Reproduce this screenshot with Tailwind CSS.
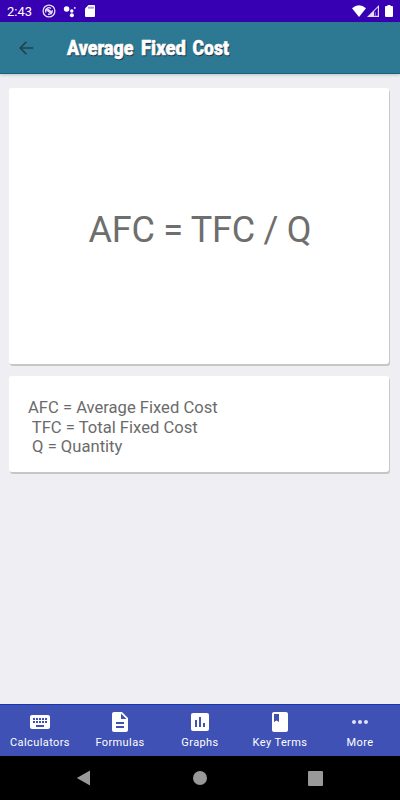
<!DOCTYPE html>
<html lang="en">
<head>
<meta charset="utf-8">
<title>Average Fixed Cost</title>
<script src="https://cdn.jsdelivr.net/npm/@tailwindcss/browser@4"></script>
</head>
<body class="w-[400px] h-[800px] overflow-hidden flex flex-col bg-[#efeef3] font-[Roboto,sans-serif]">
<div class="h-[22px] shrink-0 bg-[#3700b3] flex items-center text-white pl-[7px] pr-[7px]">
  <span class="text-[13px] leading-[22px] w-[35px] whitespace-nowrap pt-px">2:43</span>
  <svg class="w-[14px] h-[14px]" viewBox="0 0 14 14" fill="none" stroke="#e9e2f8"><circle cx="7" cy="7" r="5.9" stroke-width="1.3"/><path d="M4 8.500A3.300 3.300 0 0 1 9 4.400M10.200 6.200A3.300 3.300 0 0 1 6 10.100" stroke-width="1.300"/><path d="M4.200 5.500l5.600 4.500M5.500 5l4.800 3.500" stroke-width="1.300"/></svg>
  <svg class="w-[14px] h-[14px] ml-[7px]" viewBox="0 0 14 14" fill="#fff"><circle cx="3.6" cy="5" r="2.8"/><circle cx="8.8" cy="7" r="1.7"/><circle cx="11.8" cy="3.9" r=".9"/><circle cx="8.9" cy="11.2" r="2"/></svg>
  <svg class="w-[10px] h-[12px] ml-[8px]" viewBox="0 0 10 12"><path fill="#fff" d="M3.5 0H9a1 1 0 0 1 1 1v10a1 1 0 0 1-1 1H1a1 1 0 0 1-1-1V3.5z"/><path stroke="#3700b3" stroke-width=".8" d="M4 1.7v2M6 1.7v2M8 1.7v2"/></svg>
  <svg class="w-[14px] h-[12px] ml-auto" viewBox="0 0 14 12" fill="#fff"><path d="M0 3.2Q7-2.6 14 3.2L7 12z"/></svg>
  <svg class="w-[12px] h-[12px] ml-[1px]" viewBox="0 0 12 12"><path d="M12 0v12H0z" fill="#e4dcf5"/><path d="M7 6.4L10.8 2.6v8.2H7z" fill="#3700b3"/><path d="M8.3 7.2v3.6" stroke="#bfaee8" stroke-width=".7"/></svg>
  <svg class="w-[8px] h-[12px] ml-[6px]" viewBox="0 0 8 12" fill="#fff"><path d="M2.5 0h3v1H7a1 1 0 0 1 1 1v9a1 1 0 0 1-1 1H1a1 1 0 0 1-1-1V2a1 1 0 0 1 1-1h1.500z"/></svg>
</div>
<header class="h-[52px] shrink-0 bg-[#2d7893] border-b border-[#13657f] shadow-[0_1px_3px_rgba(0,0,0,0.2)] flex items-center pl-[19px]">
  <svg class="w-[15px] h-[14px]" viewBox="0 0 15 14" fill="none" stroke="#1d4454" stroke-width="1.6"><path d="M14.300 7H1.200M7.300.9L1.200 7l6.100 6.100"/></svg>
  <svg class="w-[180px] h-[30px] ml-[32px]" viewBox="0 0 180 30" font-family="Roboto, sans-serif" font-weight="900" font-size="19.500" stroke-width=".5">
    <g fill="#17333f" stroke="#17333f"><text x="1.800" y="23.200" textLength="66.500" lengthAdjust="spacingAndGlyphs">Average</text><text x="75.800" y="23.200" textLength="45" lengthAdjust="spacingAndGlyphs">Fixed</text><text x="127.300" y="23.200" textLength="36.500" lengthAdjust="spacingAndGlyphs">Cost</text></g>
    <g fill="#fff" stroke="#fff"><text x="1" y="22.300" textLength="66.500" lengthAdjust="spacingAndGlyphs">Average</text><text x="75" y="22.300" textLength="45" lengthAdjust="spacingAndGlyphs">Fixed</text><text x="126.500" y="22.300" textLength="36.500" lengthAdjust="spacingAndGlyphs">Cost</text></g>
  </svg>
</header>
<main class="flex-1 flex flex-col gap-[12px] pt-[14px] pl-[9px] pr-[11px]">
  <section class="h-[276px] bg-white rounded-[3px] shadow-[1px_2px_0_#c6c6c6] flex items-center justify-center">
    <h1 class="text-[36px] leading-[42px] tracking-[-0.25px] text-[#6e6e6e] whitespace-nowrap pt-[8px] pl-[2px]">AFC = TFC / Q</h1>
  </section>
  <section class="h-[96px] bg-white rounded-[3px] shadow-[1px_2px_0_#c6c6c6] pt-[22px] pl-[19px]">
    <p class="text-[16.600px] leading-[19.600px] font-normal text-[#6b6b6b] whitespace-pre">AFC = Average Fixed Cost
 TFC = Total Fixed Cost
 Q = Quantity</p>
  </section>
</main>
<nav class="h-[52px] shrink-0 bg-[#3f51b5] border-t border-[#1238b4] grid grid-cols-5 text-white text-[11px] leading-[13px] tracking-[0.4px]">
  <div class="flex flex-col items-center pt-[5px] gap-[6px]">
    <svg class="w-[24px] h-[24px] -mb-[4px]" viewBox="0 0 24 24" fill="#fff"><path d="M20 5H4c-1.100 0-1.990.9-1.990 2L2 17c0 1.100.9 2 2 2h16c1.100 0 2-.9 2-2V7c0-1.100-.9-2-2-2zm-9 3h2v2h-2V8zm0 3h2v2h-2v-2zM8 8h2v2H8V8zm0 3h2v2H8v-2zm-1 2H5v-2h2v2zm0-3H5V8h2v2zm9 7H8v-2h8v2zm0-4h-2v-2h2v2zm0-3h-2V8h2v2zm3 3h-2v-2h2v2zm0-3h-2V8h2v2z"/></svg><span>Calculators</span></div>
  <div class="flex flex-col items-center pt-[5px] gap-[6px]">
    <svg class="w-[24px] h-[24px] -mb-[4px]" viewBox="0 0 24 24" fill="#fff"><path d="M14 2H6c-1.100 0-1.990.9-1.990 2L4 20c0 1.100.89 2 1.990 2H18c1.100 0 2-.9 2-2V8l-6-6zm2 16H8v-2h8v2zm0-4H8v-2h8v2zm-3-5V3.500L18.500 9H13z"/></svg><span>Formulas</span></div>
  <div class="flex flex-col items-center pt-[5px] gap-[6px]">
    <svg class="w-[24px] h-[24px] -mb-[4px]" viewBox="0 0 24 24" fill="#fff"><path d="M19 3H5c-1.100 0-2 .9-2 2v14c0 1.100.9 2 2 2h14c1.100 0 2-.9 2-2V5c0-1.100-.9-2-2-2zM9 17H7v-7h2v7zm4 0h-2V7h2v10zm4 0h-2v-4h2v4z"/></svg><span>Graphs</span></div>
  <div class="flex flex-col items-center pt-[5px] gap-[6px]">
    <svg class="w-[24px] h-[24px] -mb-[4px]" viewBox="0 0 24 24" fill="#fff"><path d="M18 2H6c-1.100 0-2 .9-2 2v16c0 1.100.9 2 2 2h12c1.100 0 2-.9 2-2V4c0-1.100-.9-2-2-2zM6 4h5v8l-2.500-1.500L6 12V4z"/></svg><span>Key Terms</span></div>
  <div class="flex flex-col items-center pt-[5px] gap-[6px]">
    <svg class="w-[24px] h-[24px] -mb-[4px]" viewBox="0 0 24 24" fill="#dfe2f5"><path d="M6 10c-1.100 0-2 .9-2 2s.9 2 2 2 2-.9 2-2-.9-2-2-2zm12 0c-1.100 0-2 .9-2 2s.9 2 2 2 2-.9 2-2-.9-2-2-2zm-6 0c-1.100 0-2 .9-2 2s.9 2 2 2 2-.9 2-2-.9-2-2-2z"/></svg><span>More</span></div>
</nav>
<footer class="h-[44px] shrink-0 bg-black flex items-center pl-[76px]">
  <svg class="w-[14px] h-[16px]" viewBox="0 0 14 16"><path fill="#999" d="M14 .5v15L.8 8z"/></svg>
  <div class="w-[14px] h-[14px] rounded-full bg-[#999] ml-[103px]"></div>
  <div class="w-[15px] h-[15px] rounded-[1px] bg-[#999] ml-[101px]"></div>
</footer>
</body>
</html>
